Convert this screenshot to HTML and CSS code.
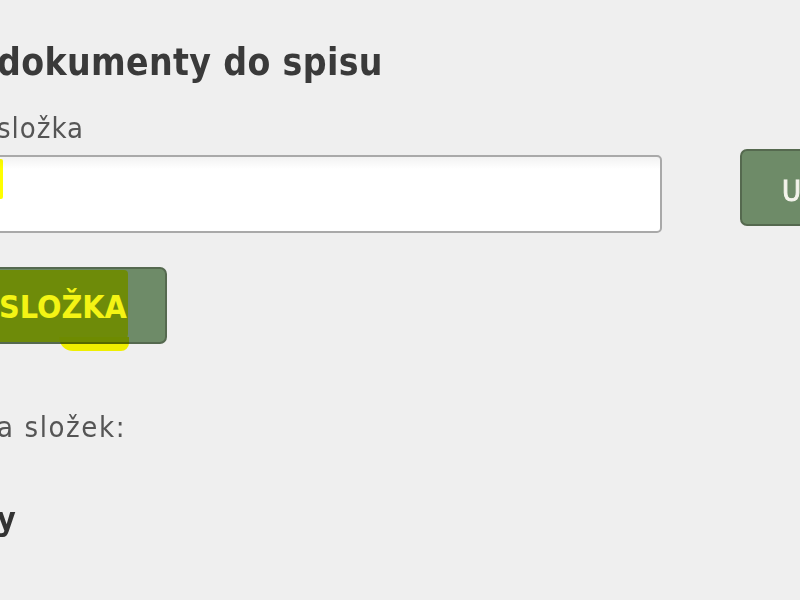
FILE: index.html
```html
<!DOCTYPE html>
<html lang="cs">
<head>
<meta charset="utf-8">
<title>Přidat dokumenty do spisu</title>
<link rel="stylesheet" href="styles.css">
</head>
<body>
<div class="page">
  <h1 class="title">dokumenty do spisu</h1>
  <div class="label">složka</div>
  <div class="row">
    <div class="input-wrap">
      <input class="input" type="text">
      <span class="hl hl-input"></span>
    </div>
    <button class="btn btn-save">ULOŽIT</button>
  </div>
  <div class="btn-row">
    <button class="btn btn-new">SLOŽKA</button>
    <span class="hl hl-btn"></span>
    <span class="hl hl-tail"></span>
  </div>
  <div class="label label-struct">a složek:</div>
  <div class="sub">y</div>
</div>
</body>
</html>
```
FILE: styles.css
```css
html, body {
  margin: 0;
  padding: 0;
  background: #efefef;
}
body {
  font-family: "DejaVu Sans Condensed", "DejaVu Sans", sans-serif;
  overflow: hidden;
  width: 800px;
  height: 600px;
}
.page {
  margin-left: -3px;
  padding-top: 39px;
  display: flex;
  flex-direction: column;
}
.title {
  margin: 0;
  font-size: 37px;
  font-weight: bold;
  color: #3a3a3a;
  line-height: 48px;
  letter-spacing: 0.35px;
}
.label {
  margin-top: 23px;
  font-size: 29px;
  color: #555;
  line-height: 36px;
  letter-spacing: 1px;
}
.row {
  display: flex;
  align-items: flex-start;
  gap: 78px;
  margin-top: 3px;
}
.input-wrap {
  position: relative;
  margin-left: -20px;
  margin-top: 6px;
}
.input {
  display: block;
  box-sizing: border-box;
  width: 685px;
  height: 78px;
  border: 2px solid #a9a9a9;
  border-radius: 5px;
  background: linear-gradient(#f2f2f2 0, #fff 12px);
  outline: none;
}
.btn {
  font-family: inherit;
  font-weight: bold;
  border: 2px solid #55694f;
  border-radius: 7px;
  background: #6e8b68;
  color: #f4f4ec;
  box-sizing: border-box;
  height: 77px;
  margin: 0;
}
.btn-save {
  width: 140px;
  text-align: left;
  padding: 6px 0 0 40px;
  font-size: 29px;
  font-weight: normal;
  -webkit-text-stroke: 1px #f4f4ec;
  letter-spacing: 1px;
}
.btn-row {
  position: relative;
  margin-top: 34px;
  display: flex;
}
.btn-new {
  margin-left: -40px;
  width: 210px;
  padding: 2px 40px 0 40px;
  text-align: left;
  font-size: 32px;
  letter-spacing: 0px;
}
.hl {
  position: absolute;
  background: #ffff00;
  mix-blend-mode: multiply;
  pointer-events: none;
}
.hl-input {
  left: 20px;
  top: 4px;
  width: 6px;
  height: 40px;
  border-radius: 2px;
}
.hl-btn {
  left: 0;
  top: 3px;
  width: 131px;
  height: 72px;
  border-radius: 0 4px 8px 0;
  opacity: 0.92;
}
.hl-tail {
  left: 62px;
  top: 70px;
  width: 70px;
  height: 14px;
  border-radius: 0 0 8px 14px;
}
.label-struct {
  margin-top: 65px;
  letter-spacing: 1.6px;
}
.sub {
  margin-top: 54px;
  font-size: 32px;
  font-weight: bold;
  color: #333;
  line-height: 40px;
}
```
